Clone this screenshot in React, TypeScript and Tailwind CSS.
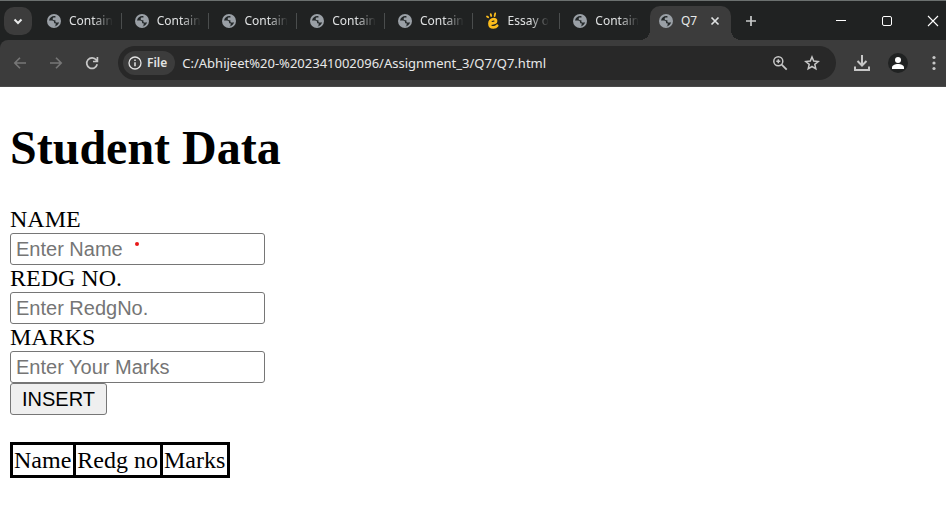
import type { ReactNode } from "react";

const UI = "font-['Noto_Sans',sans-serif]";

function Globe() {
  return (
    <svg viewBox="0 0 16 16" className="size-4 shrink-0" aria-hidden="true">
      <circle cx="8" cy="8" r="7" fill="#9aa0a6" />
      <path
        d="M9.500 3.200C6.500 2.500 3.700 4.300 3 7.400h3.100c1.300 0 2 .8 2 1.900v1h1.500v2.200l-1.200.9c2.300-.3 4.200-1.900 4.700-4.200l-1 .2h-1.800c-.6 0-.9-.3-.9-.9V7.200H7.900c-.8 0-1.200-.5-1.200-1.200 0-.9.600-1.400 1.400-1.400h1.400z"
        fill="#24292a"
      />
    </svg>
  );
}

function EssayIcon() {
  return (
    <svg viewBox="0 0 16 18" className="h-[18px] w-4 shrink-0" fill="none" stroke="#fbbc1c" strokeLinecap="round" aria-hidden="true">
      <path d="M6 11.500c3 0 5-.7 5-2.400 0-1.200-.9-1.900-2.300-1.900-2.400 0-4.200 1.800-4.200 4.200 0 2.500 1.600 4 3.900 4 1.500 0 2.900-.6 3.700-1.700" strokeWidth="2.800" />
      <path d="M3.200 5.200 2 4.400M6.200 4 5.700 2.100M9.600 4l.6-2.600" strokeWidth="1.800" />
    </svg>
  );
}

function Tab({ title, icon, last }: { title: string; icon: ReactNode; last?: boolean }) {
  return (
    <button className="relative flex h-9 min-w-0 flex-1 items-center gap-[7px] pl-3 text-left">
      {icon}
      <span className="whitespace-nowrap text-[12px] leading-4 text-[#dfe1e2] [mask-image:linear-gradient(to_right,black_55%,transparent)]">
        {title}
      </span>
      {!last && <span className="absolute right-0 h-4 w-px bg-[#4a4d4d]" />}
    </button>
  );
}

function Field({ id, label, placeholder }: { id: string; label: string; placeholder: string }) {
  return (
    <div className="flex flex-col items-start">
      <label htmlFor={id} className="leading-[27px]">{label}</label>
      <input
        id={id}
        type="text"
        placeholder={placeholder}
        className="h-8 w-[255px] max-w-full rounded-[3px] border border-[#767676] bg-white px-[5px] font-['Liberation_Sans',sans-serif] text-[20px] leading-6 placeholder:text-[#757575]"
      />
    </div>
  );
}

const COLUMNS = ["Name", "Redg no", "Marks"];

export default function App() {
  return (
    <div className="min-h-screen bg-white text-black">
      <header className={`${UI} border-t border-[#6b706f] bg-[#202222]`}>
        <div className="flex h-[39px] items-center">
          <button aria-label="Search tabs" className="ml-1 flex size-7 shrink-0 items-center justify-center rounded-[10px] bg-[#3c3c3c]">
            <svg viewBox="0 0 12 12" className="size-3" fill="none" stroke="#e8eaea" strokeWidth="2" aria-hidden="true">
              <path d="M2.500 4.500 6 8l3.500-3.500" />
            </svg>
          </button>
          <nav className="ml-[2px] mr-[2px] flex min-w-0 flex-[0_1_614px] items-center">
            <Tab title="Contain" icon={<Globe />} />
            <Tab title="Contain" icon={<Globe />} />
            <Tab title="Contain" icon={<Globe />} />
            <Tab title="Contain" icon={<Globe />} />
            <Tab title="Contain" icon={<Globe />} />
            <Tab title="Essay o" icon={<EssayIcon />} />
            <Tab title="Contain" icon={<Globe />} last />
          </nav>
          <div className="relative flex h-[34px] w-[81px] shrink-0 items-center self-end rounded-t-[10px] bg-[#3c3c3c] pb-1 pl-2">
            <span className="absolute -left-[10px] bottom-0 size-[10px] bg-[radial-gradient(circle_at_top_left,transparent_10px,#3c3c3c_10px)]" />
            <span className="absolute -right-[10px] bottom-0 size-[10px] bg-[radial-gradient(circle_at_top_right,transparent_10px,#3c3c3c_10px)]" />
            <Globe />
            <span className="ml-[7px] text-[12px] leading-4 text-[#e8eaea]">Q7</span>
            <button aria-label="Close tab" className="ml-auto mr-2 flex size-4 items-center justify-center">
              <svg viewBox="0 0 10 10" className="size-[10px]" stroke="#dfe1e2" strokeWidth="1.700" aria-hidden="true">
                <path d="m1.500 1.500 7 7m0-7-7 7" />
              </svg>
            </button>
          </div>
          <button aria-label="New tab" className="ml-3 flex size-4 items-center justify-center">
            <svg viewBox="0 0 12 12" className="size-3" stroke="#c8caca" strokeWidth="1.700" aria-hidden="true">
              <path d="M6 1v10M1 6h10" />
            </svg>
          </button>
          <div className="ml-auto flex items-center gap-[30px] pr-[5px] text-white">
            <button aria-label="Minimize" className="flex size-4 items-center justify-center"><span className="h-px w-[10px] bg-white" /></button>
            <button aria-label="Maximize" className="flex size-4 items-center justify-center"><span className="size-[10px] rounded-[2px] border border-white" /></button>
            <button aria-label="Close window" className="flex size-4 items-center justify-center">
              <svg viewBox="0 0 12 12" className="size-3" stroke="white" strokeWidth="1.100" aria-hidden="true"><path d="m1 1 10 10M11 1 1 11" /></svg>
            </button>
          </div>
        </div>
        <div className="flex h-[47px] items-center rounded-tl-[8px] border-b border-[#4a4a4a] bg-[#3c3c3c] pl-3 text-[#c7c7c7]">
          <div className="flex items-center gap-5">
            <button aria-label="Back" className="text-[#777]">
              <svg viewBox="0 0 16 16" className="size-4" fill="none" stroke="currentColor" strokeWidth="1.600" aria-hidden="true"><path d="M14 8H3M8 2.800 2.800 8 8 13.200" /></svg>
            </button>
            <button aria-label="Forward" className="text-[#777]">
              <svg viewBox="0 0 16 16" className="size-4" fill="none" stroke="currentColor" strokeWidth="1.600" aria-hidden="true"><path d="M2 8h11M8 2.800 13.200 8 8 13.200" /></svg>
            </button>
            <button aria-label="Reload">
              <svg viewBox="0 0 16 16" className="size-4" fill="none" stroke="currentColor" strokeWidth="1.700" aria-hidden="true"><path d="M13.200 9.300A5.300 5.300 0 1 1 12.300 5l1 1.200M13.400 2v4.500H9" /></svg>
            </button>
          </div>
          <div className="ml-[18px] flex h-[34px] min-w-0 flex-1 items-center rounded-full bg-[#282828] pl-[5px] pr-4">
            <button className="flex h-6 shrink-0 items-center gap-1 rounded-full bg-[#3c3c3c] pl-1 pr-2 text-[12px] font-semibold leading-4 text-[#e3e3e3]">
              <svg viewBox="0 0 16 16" className="size-4" fill="none" stroke="currentColor" strokeWidth="1.300" aria-hidden="true">
                <circle cx="8" cy="8" r="6" /><path d="M8 7.200v4M8 4.600v1.400" strokeWidth="1.500" />
              </svg>
              File
            </button>
            <input
              aria-label="Address"
              defaultValue="C:/Abhijeet%20-%202341002096/Assignment_3/Q7/Q7.html"
              className="ml-[7px] min-w-0 flex-1 bg-transparent text-[13px] leading-5 text-[#e8e8e8] outline-none"
            />
            <button aria-label="Zoom">
              <svg viewBox="0 0 16 16" className="size-4" fill="none" stroke="currentColor" strokeWidth="1.500" aria-hidden="true">
                <circle cx="6.300" cy="6.300" r="4.500" /><path d="m9.700 9.700 5 5" strokeWidth="1.800" /><path d="M6.300 4.300v4M4.300 6.300h4" />
              </svg>
            </button>
            <button aria-label="Bookmark this page" className="ml-4">
              <svg viewBox="0 0 16 16" className="size-4" fill="none" stroke="currentColor" strokeWidth="1.500" aria-hidden="true">
                <path d="m8 2 1.700 4.100 4.500.4-3.400 2.900 1 4.400L8 11.500l-3.800 2.300 1-4.400-3.400-2.900 4.500-.4z" />
              </svg>
            </button>
          </div>
          <button aria-label="Downloads" className="ml-4">
            <svg viewBox="0 0 20 20" className="size-5" fill="none" stroke="currentColor" strokeWidth="2" aria-hidden="true">
              <path d="M10 2v10M5.500 8l4.500 4.500L14.500 8M3 13.500V17h14v-3.500" />
            </svg>
          </button>
          <button aria-label="Profile" className="ml-4 flex size-5 items-center justify-center rounded-full bg-[#202222]">
            <svg viewBox="0 0 14 14" className="size-[14px]" fill="white" aria-hidden="true"><circle cx="7" cy="4" r="3" /><path d="M1 13v-1.500C1 9.500 4 8 7 8s6 1.500 6 3.500V13z" /></svg>
          </button>
          <button aria-label="Menu" className="ml-[18px] mr-1">
            <svg viewBox="0 0 16 16" className="size-4" fill="currentColor" aria-hidden="true"><circle cx="8" cy="2.500" r="1.600" /><circle cx="8" cy="8" r="1.600" /><circle cx="8" cy="13.500" r="1.600" /></svg>
          </button>
        </div>
      </header>
      <main className="px-[10px] pt-8 font-['Liberation_Serif',serif] text-[24px] leading-[27px]">
        <h1 className="text-[48px] font-bold leading-[57px]">Student Data</h1>
        <form className="relative mt-[30px]" onSubmit={(e) => e.preventDefault()}>
          <Field id="name" label="NAME" placeholder="Enter Name" />
          <span className="absolute left-[125px] top-9 size-1 rounded-full bg-[#e81818]" />
          <Field id="redg" label="REDG NO." placeholder="Enter RedgNo." />
          <Field id="marks" label="MARKS" placeholder="Enter Your Marks" />
          <button className="block h-8 rounded-[3px] border border-[#767676] bg-[#efefef] px-[11px] font-['Liberation_Sans',sans-serif] text-[20px] leading-6">INSERT</button>
        </form>
        <table className="mt-[27px] border-collapse border-[3px] border-black">
          <thead>
            <tr>
              {COLUMNS.map((column) => (
                <th key={column} scope="col" className="border-[3px] border-black pb-px pl-px pr-[2px] pt-[2px] font-normal">
                  {column}
                </th>
              ))}
            </tr>
          </thead>
        </table>
      </main>
    </div>
  );
}
